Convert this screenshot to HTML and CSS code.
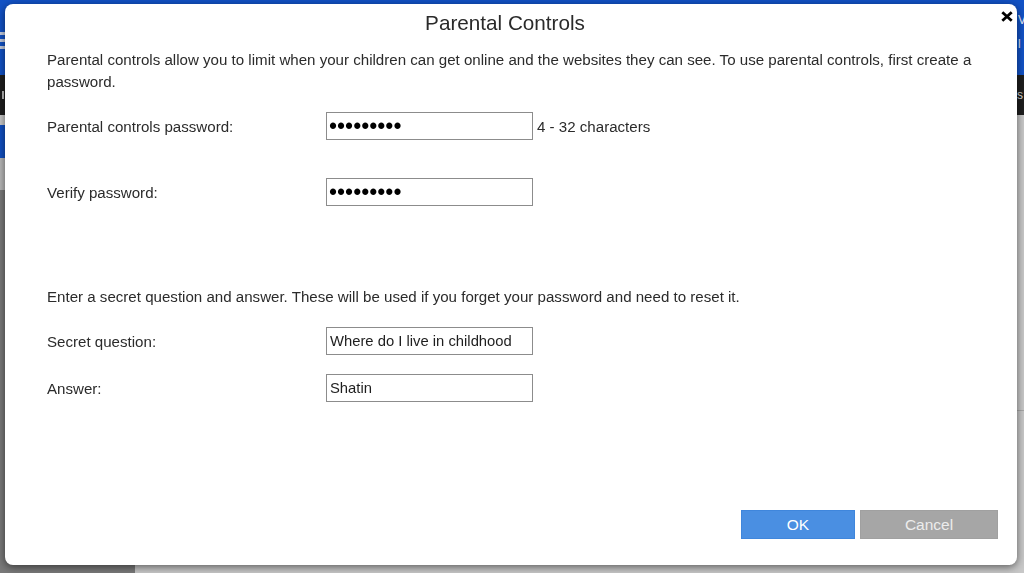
FILE: index.html
```html
<!DOCTYPE html>
<html lang="en">
<head>
<meta charset="utf-8">
<title>Parental Controls</title>
<link rel="stylesheet" href="styles.css">
</head>
<body>
<div class="page">
  <header class="topbar">
    <div class="hamburger"><span></span><span></span><span></span></div>
    <div class="top-right"><span>V</span><span>l</span></div>
  </header>
  <nav class="navbar"><span class="nav-mark"></span><span class="nav-right">s</span></nav>
  <div class="main">
    <aside class="sidebar">
      <div class="side-item side-light"></div>
      <div class="side-item side-active"></div>
      <div class="side-item side-grey"></div>
    </aside>
    <section class="content"><div class="divider"></div></section>
  </div>
</div>

<div class="dialog" role="dialog" aria-labelledby="dlg-title">
  <div class="dialog-head">
    <h1 class="dialog-title" id="dlg-title">Parental Controls</h1>
    <button class="close" aria-label="Close">
      <svg width="12" height="11" viewBox="0 0 12 11"><path d="M1.3 1.2 L10.7 9.8 M10.7 1.2 L1.3 9.8" stroke="#000" stroke-width="2.8" fill="none"/></svg>
    </button>
  </div>
  <div class="dialog-body">
    <p class="intro">Parental controls allow you to limit when your children can get online and the websites they can see. To use parental controls, first create a password.</p>
    <div class="field-row row-first">
      <label class="field-label" for="pw">Parental controls password:</label>
      <input class="field-input pw" id="pw" type="password" value="123456789">
      <span class="hint">4 - 32 characters</span>
    </div>
    <div class="field-row row-verify">
      <label class="field-label" for="pw2">Verify password:</label>
      <input class="field-input pw" id="pw2" type="password" value="123456789">
    </div>
    <p class="secret-intro">Enter a secret question and answer. These will be used if you forget your password and need to reset it.</p>
    <div class="field-row row-q">
      <label class="field-label" for="q">Secret question:</label>
      <input class="field-input" id="q" type="text" value="Where do I live in childhood">
    </div>
    <div class="field-row row-q">
      <label class="field-label" for="a">Answer:</label>
      <input class="field-input" id="a" type="text" value="Shatin">
    </div>
  </div>
  <div class="dialog-foot">
    <button class="btn btn-ok">OK</button>
    <button class="btn btn-cancel">Cancel</button>
  </div>
</div>
</body>
</html>
```
FILE: styles.css
```css
* { box-sizing: border-box; }
html, body { margin: 0; padding: 0; height: 100%; }
body {
  font-family: "Liberation Sans", Arial, sans-serif;
  overflow: hidden;
  background: #c6c6c6;
}

/* background page */
.page { height: 573px; display: flex; flex-direction: column; }
.topbar { height: 75px; background: #1252c6; display: flex; }
.hamburger { width: 30px; padding-top: 32px; display: flex; flex-direction: column; gap: 4px; }
.hamburger span { height: 3px; background: #c4cde0; }
.top-right {
  margin-left: auto; width: 6px; white-space: nowrap;
  display: flex; flex-direction: column; padding-top: 8px;
  color: #e8eefa; font-size: 12px; line-height: 24px;
}
.navbar { height: 40px; background: #1e1e1e; display: flex; align-items: center; }
.nav-mark { width: 2px; height: 8px; margin-left: 2px; background: #bbb; }
.nav-right { margin-left: auto; padding-right: 1px; color: #d8d8d8; font-size: 12px; }
.main { flex: 1; display: flex; }
.sidebar { width: 135px; background: #7a7a7a; display: flex; flex-direction: column; }
.side-light { height: 10px; background: #c9c9c9; }
.side-active { height: 33px; background: #1150c2; }
.side-grey { height: 32px; background: #b8b8b8; }
.content { flex: 1; background: #c8c8c8; }
.divider { margin-top: 295px; height: 1px; background: #a9a9a9; }

/* dialog */
.dialog {
  position: fixed; left: 5px; top: 4px;
  width: 1012px; height: 561px;
  background: #fff; border-radius: 8px;
  box-shadow: 0 2px 8px rgba(0, 0, 0, 0.55);
  display: flex; flex-direction: column;
  color: #2b2b2b;
}
.dialog-head { position: relative; height: 37px; padding-right: 12px; }
.dialog-title {
  margin: 0; text-align: center; font-weight: normal;
  font-size: 20.7px; line-height: 37px; color: #2a2a2a;
}
.close {
  position: absolute; top: 7px; right: 4px;
  width: 12px; height: 11px; padding: 0; border: 0; background: none;
  display: flex; cursor: pointer;
}
.dialog-body { padding: 0 30px 0 42px; font-size: 15.1px; }
.intro { margin: 8px 0 0; line-height: 22px; }
.field-row { display: grid; grid-template-columns: 279px 207px auto; align-items: center; height: 28px; }
.row-first { margin-top: 19px; }
.row-verify { margin-top: 38px; }
.row-q { margin-top: 19px; }
.field-label { color: #2b2b2b; }
.field-input {
  width: 207px; height: 28px; margin: 0;
  border: 1px solid #8c8c8c; border-radius: 0;
  padding: 0 3px; outline: none;
  font-family: "Liberation Sans", Arial, sans-serif; font-size: 14.8px; color: #1e1e1e;
  background: #fff;
}
.field-input.pw { font-size: 23px; letter-spacing: 0; color: #000; padding-left: 2px; }
.hint { margin-left: 4px; color: #2b2b2b; }
.secret-intro { margin: 80px 0 0; line-height: 22px; }

.dialog-foot {
  margin-top: auto; padding: 0 19px 26px 0;
  display: flex; justify-content: flex-end; gap: 5px;
}
.btn {
  height: 29px; border: 1px solid transparent; border-radius: 0;
  font-family: "Liberation Sans", Arial, sans-serif; font-size: 15.5px;
  padding: 0; cursor: pointer;
}
.btn-ok { width: 114px; background: #4a8fe2; border-color: #3f86dc; color: #fff; }
.btn-cancel { width: 138px; background: #a6a6a6; border-color: #a0a0a0; color: #ececec; }
```
